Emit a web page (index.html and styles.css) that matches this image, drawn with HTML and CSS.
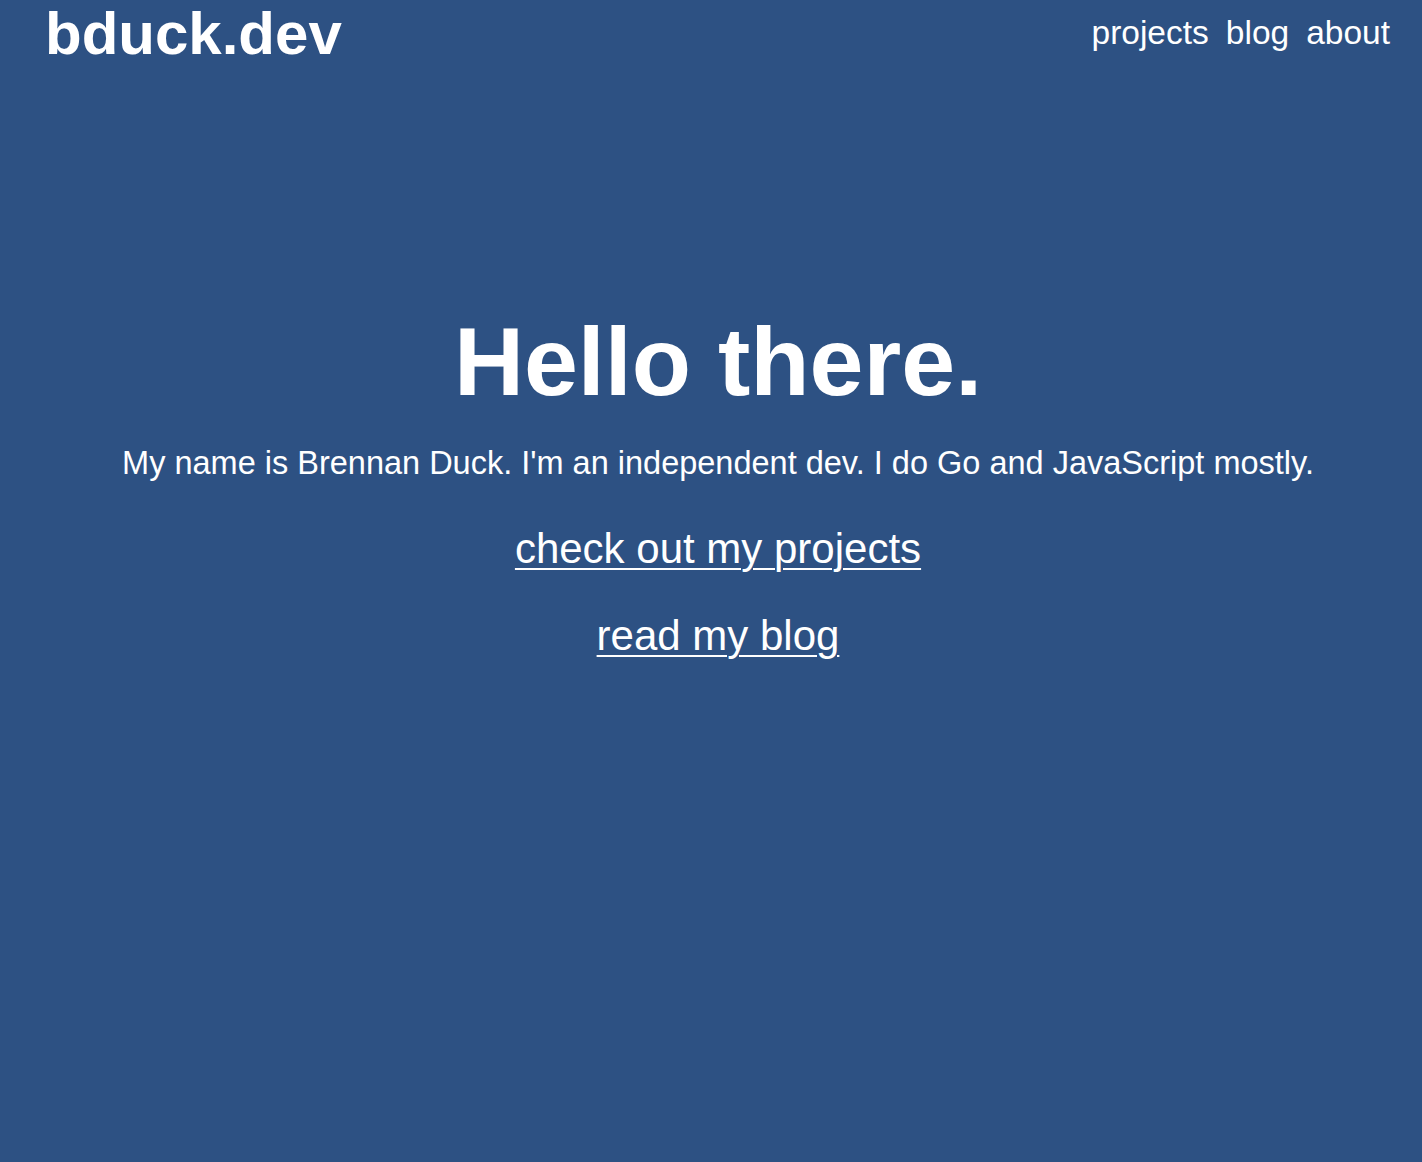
FILE: index.html
```html
<!DOCTYPE html>
<html lang="en">

<head>
    <meta charset="utf-8">
    <title>bduck.dev</title>
    <link rel="stylesheet" href="styles.css">
</head>

<body>
    <header class="topbar">
        <a class="logo" href="#">bduck.dev</a>
        <nav class="nav">
            <a href="#">projects</a>
            <a href="#">blog</a>
            <a href="#">about</a>
        </nav>
    </header>

    <main class="hero">
        <h1 class="title">Hello there.</h1>
        <p class="intro">My name is Brennan Duck. I'm an independent dev. I do Go and JavaScript mostly.</p>
        <a class="cta" href="#">check out my projects</a>
        <a class="cta second" href="#">read my blog</a>
    </main>
</body>

</html>
```

FILE: styles.css
```css
html,
body {
    margin: 0;
    min-height: 100%;
}

body {
    background-color: #2d5183;
    color: #ffffff;
    font-family: "Liberation Sans", Arial, sans-serif;
    min-height: 1162px;
}

a {
    color: #ffffff;
}

.topbar {
    display: flex;
    justify-content: space-between;
    align-items: flex-start;
    padding: 4px 32px 0 45px;
}

.logo {
    font-size: 60px;
    line-height: 1;
    font-weight: bold;
    text-decoration: none;
}

.nav {
    display: flex;
    gap: 17px;
    padding-top: 12px;
}

.nav a {
    font-size: 33.5px;
    line-height: 1;
    text-decoration: none;
}

.hero {
    display: flex;
    flex-direction: column;
    align-items: center;
    padding-left: 14px;
    margin-top: 249px;
}

.title {
    font-size: 97px;
    line-height: 1;
    font-weight: bold;
    margin: 0;
}

.intro {
    font-size: 32.5px;
    line-height: 1;
    margin: 37px 0 0;
}

.cta {
    font-size: 42px;
    line-height: 1;
    margin-top: 48px;
    text-underline-offset: 5px;
    text-decoration-thickness: 2px;
}

.cta.second {
    margin-top: 45px;
}
```
